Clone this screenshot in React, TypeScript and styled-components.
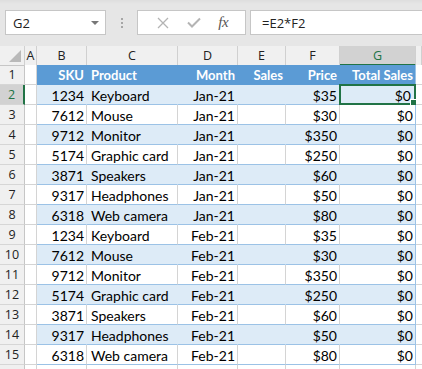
import styled, { createGlobalStyle } from "styled-components";

const GlobalStyle = createGlobalStyle`
	html, body {
		margin: 0;
		padding: 0;
		background: #ffffff;
		overflow: hidden;
	}
	* {
		box-sizing: border-box;
	}
`;

const GREEN = "#217346";
const GRID = "#d4d4d4";
const TABLE_LINE = "#9bc2e6";
const TEMPLATE = "25px 12px 50px 91px 60px 48px 54px 76px 1fr";

type Row = [number, string, string, string, string];

const rows: Row[] = [
	[1234, "Keyboard", "Jan-21", "$35", "$0"],
	[7612, "Mouse", "Jan-21", "$30", "$0"],
	[9712, "Monitor", "Jan-21", "$350", "$0"],
	[5174, "Graphic card", "Jan-21", "$250", "$0"],
	[3871, "Speakers", "Jan-21", "$60", "$0"],
	[9317, "Headphones", "Jan-21", "$50", "$0"],
	[6318, "Web camera", "Jan-21", "$80", "$0"],
	[1234, "Keyboard", "Feb-21", "$35", "$0"],
	[7612, "Mouse", "Feb-21", "$30", "$0"],
	[9712, "Monitor", "Feb-21", "$350", "$0"],
	[5174, "Graphic card", "Feb-21", "$250", "$0"],
	[3871, "Speakers", "Feb-21", "$60", "$0"],
	[9317, "Headphones", "Feb-21", "$50", "$0"],
	[6318, "Web camera", "Feb-21", "$80", "$0"],
];

const Sheet = styled.div`
	width: 422px;
	height: 369px;
	overflow: hidden;
	font-family: "Lato", "Liberation Sans", sans-serif;
`;

/* formula bar */
const TopBar = styled.div`
	display: flex;
	height: 46px;
	padding: 10px 0 11px 5px;
	background: linear-gradient(#dedede 0, #e6e6e6 4px, #e6e6e6 100%);
`;

const Box = styled.div<{ $width?: number }>`
	display: flex;
	align-items: center;
	height: 25px;
	background: #ffffff;
	border: 1px solid #c6c6c6;
	${(p) => (p.$width ? `width: ${p.$width}px;` : "flex: 1; border-right: none;")}
`;

const NameText = styled.span`
	flex: 1;
	padding-left: 7px;
	font-family: "Open Sans", "Liberation Sans", sans-serif;
	font-size: 13px;
	color: #222;
`;

const DropArrow = styled.span`
	width: 0;
	height: 0;
	margin-right: 6px;
	border-left: 4px solid transparent;
	border-right: 4px solid transparent;
	border-top: 4px solid #777;
`;

const Grip = styled.div`
	width: 31px;
	display: flex;
	flex-direction: column;
	align-items: center;
	justify-content: center;
	gap: 2px;
	span {
		width: 2px;
		height: 2px;
		background: #a6a6a6;
	}
`;

const FxButtons = styled(Box)`
	justify-content: space-around;
	padding: 0 8px 0 10px;
	margin-right: 4px;
`;

const FxLabel = styled.span`
	font-family: "Liberation Serif", serif;
	font-style: italic;
	font-size: 15px;
	color: #555;
	letter-spacing: -0.5px;
`;

const FormulaText = styled.span`
	padding-left: 11px;
	font-family: "Open Sans", "Liberation Sans", sans-serif;
	font-size: 13px;
	color: #222;
`;

/* grid */
const GridRow = styled.div<{ $height: number }>`
	display: grid;
	grid-template-columns: ${TEMPLATE};
	height: ${(p) => p.$height}px;
`;

const ColHead = styled.div<{ $selected?: boolean }>`
	display: flex;
	align-items: center;
	justify-content: center;
	font-family: "Open Sans", "Liberation Sans", sans-serif;
	font-size: 12.5px;
	color: ${(p) => (p.$selected ? GREEN : "#222")};
	background: ${(p) => (p.$selected ? "#d2d2d2" : "#f0f0f0")};
	border-right: 1px solid #d0d0d0;
	border-bottom: ${(p) => (p.$selected ? `2px solid ${GREEN}` : "1px solid #c6c6c6")};
	padding-top: ${(p) => (p.$selected ? "1px" : "0")};
`;

const Corner = styled(ColHead)`
	position: relative;
	svg {
		position: absolute;
		right: 3px;
		bottom: 3px;
	}
`;

const RowHead = styled.div<{ $selected?: boolean }>`
	display: flex;
	align-items: center;
	justify-content: center;
	font-family: "Open Sans", "Liberation Sans", sans-serif;
	font-size: 12.5px;
	color: ${(p) => (p.$selected ? GREEN : "#222")};
	background: ${(p) => (p.$selected ? "#d2d2d2" : "#f0f0f0")};
	border-bottom: 1px solid #d6d6d6;
	border-right: ${(p) => (p.$selected ? `2px solid ${GREEN}` : "1px solid #c6c6c6")};
`;

type Kind = "plain" | "head" | "band" | "white";

const bg: Record<Kind, string> = {
	plain: "#ffffff",
	head: "#5b9bd5",
	band: "#ddebf7",
	white: "#ffffff",
};

const Cell = styled.div<{ $kind: Kind; $align?: "left" | "right"; $edge?: boolean; $active?: boolean }>`
	position: relative;
	display: flex;
	align-items: center;
	justify-content: ${(p) => (p.$align === "left" ? "flex-start" : "flex-end")};
	padding: 1px ${(p) => (p.$active ? "4px" : "2px")} 0 4px;
	font-size: ${(p) => (p.$kind === "head" ? "13px" : "14px")};
	white-space: nowrap;
	color: ${(p) => (p.$kind === "head" ? "#ffffff" : "#000000")};
	font-weight: ${(p) => (p.$kind === "head" ? 700 : 400)};
	background: ${(p) => bg[p.$kind]};
	border-right: 1px solid
		${(p) =>
			p.$edge
				? TABLE_LINE
				: p.$kind === "plain" || p.$kind === "white"
					? GRID
					: bg[p.$kind]};
	border-bottom: 1px solid
		${(p) => (p.$kind === "plain" ? GRID : p.$kind === "head" ? bg.head : TABLE_LINE)};

	${(p) =>
		p.$active &&
		`
		&::before {
			content: "";
			position: absolute;
			top: -1px;
			left: -1px;
			right: -1px;
			bottom: -1px;
			border: 2px solid ${GREEN};
		}
		&::after {
			content: "";
			position: absolute;
			right: -4px;
			bottom: -4px;
			width: 7px;
			height: 7px;
			background: ${GREEN};
			border: 1px solid #ffffff;
		}
	`}
`;

const CrossIcon = () => (
	<svg width="12" height="12" viewBox="0 0 12 12">
		<path d="M1 1 L11 11 M11 1 L1 11" stroke="#b4b4b4" strokeWidth="1.3" fill="none" />
	</svg>
);

const CheckIcon = () => (
	<svg width="14" height="11" viewBox="0 0 14 11">
		<path d="M1 5.5 L5 9.5 L13 1.5" stroke="#b4b4b4" strokeWidth="2" fill="none" />
	</svg>
);

const CornerMark = () => (
	<svg width="12" height="12" viewBox="0 0 12 12">
		<polygon points="12,0 12,12 0,12" fill="#b9b9b9" />
	</svg>
);

const letters = ["A", "B", "C", "D", "E", "F", "G", ""];

export default function App() {
	return (
		<>
			<GlobalStyle />
			<Sheet>
				<TopBar>
					<Box $width={101}>
						<NameText>G2</NameText>
						<DropArrow />
					</Box>
					<Grip>
						<span />
						<span />
						<span />
					</Grip>
					<FxButtons $width={109}>
						<CrossIcon />
						<CheckIcon />
						<FxLabel>fx</FxLabel>
					</FxButtons>
					<Box>
						<FormulaText>=E2*F2</FormulaText>
					</Box>
				</TopBar>

				<GridRow $height={19}>
					<Corner>
						<CornerMark />
					</Corner>
					{letters.map((l, i) => (
						<ColHead key={i} $selected={l === "G"}>
							{l}
						</ColHead>
					))}
				</GridRow>

				<GridRow $height={20}>
					<RowHead>1</RowHead>
					<Cell $kind="plain" />
					<Cell $kind="head">SKU</Cell>
					<Cell $kind="head" $align="left">
						Product
					</Cell>
					<Cell $kind="head">Month</Cell>
					<Cell $kind="head">Sales</Cell>
					<Cell $kind="head">Price</Cell>
					<Cell $kind="head" $edge>
						Total Sales
					</Cell>
					<Cell $kind="plain" />
				</GridRow>

				{rows.map((r, i) => {
					const kind: Kind = i % 2 === 0 ? "band" : "white";
					return (
						<GridRow $height={20} key={i}>
							<RowHead $selected={i === 0}>{i + 2}</RowHead>
							<Cell $kind="plain" />
							<Cell $kind={kind}>{r[0]}</Cell>
							<Cell $kind={kind} $align="left">
								{r[1]}
							</Cell>
							<Cell $kind={kind}>{r[2]}</Cell>
							<Cell $kind={kind} />
							<Cell $kind={kind}>{r[3]}</Cell>
							<Cell $kind={kind} $edge $active={i === 0}>
								{r[4]}
							</Cell>
							<Cell $kind="plain" />
						</GridRow>
					);
				})}

				<GridRow $height={20}>
					<RowHead />
					{letters.map((_, i) => (
						<Cell key={i} $kind="plain" />
					))}
				</GridRow>
			</Sheet>
		</>
	);
}
